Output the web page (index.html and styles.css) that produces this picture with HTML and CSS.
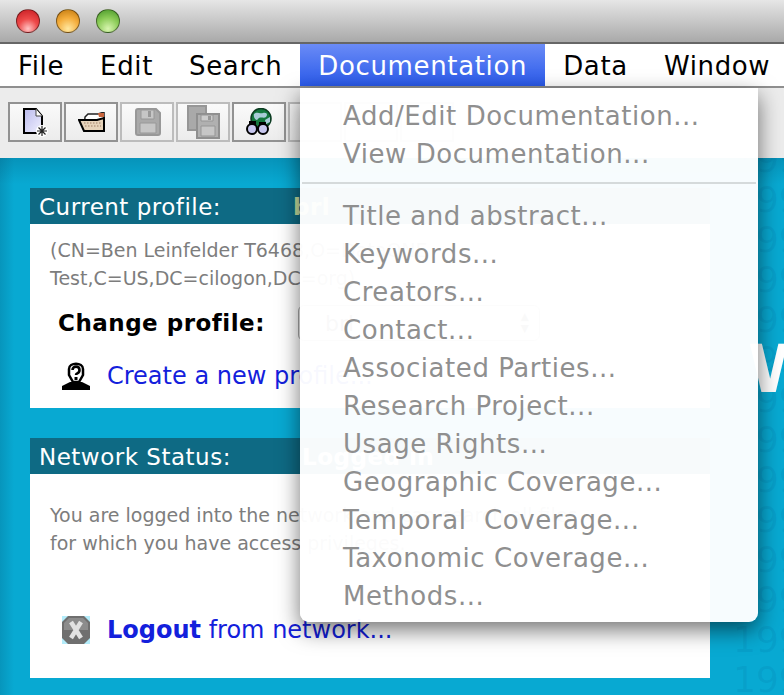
FILE: index.html
```html
<!DOCTYPE html>
<html lang="en">
<head>
  <meta charset="UTF-8">
  <title>Morpho</title>
  <link rel="stylesheet" href="styles.css">
</head>
<body>

  <div class="titlebar">
    <span class="light light-red"></span>
    <span class="light light-yellow"></span>
    <span class="light light-green"></span>
  </div>

  <nav class="menubar">
    <span class="menu-title">File</span>
    <span class="menu-title">Edit</span>
    <span class="menu-title">Search</span>
    <span class="menu-title menu-open">Documentation</span>
    <span class="menu-title">Data</span>
    <span class="menu-title">Window</span>
  </nav>

  <div class="toolbar">
    <button class="tool" type="button">
      <svg width="30" height="32" viewBox="0 0 30 32">
        <defs>
          <linearGradient id="sheet" x1="0" y1="0" x2="1" y2="1">
            <stop offset="0" stop-color="#b9b9ec"/>
            <stop offset="1" stop-color="#f2f2ff"/>
          </linearGradient>
        </defs>
        <path d="M4 3H16L22 10V27H4Z" fill="url(#sheet)" stroke="#000" stroke-width="2"/>
        <path d="M16 3V10H22" fill="#fff" stroke="#444" stroke-width="1"/>
        <circle cx="22" cy="25" r="6" fill="#fff"/>
        <path d="M22 20V30M17 25H27M18.500 21.500L25.500 28.500M25.500 21.500L18.500 28.500" stroke="#222" stroke-width="1.2"/>
      </svg>
    </button>
    <button class="tool" type="button">
      <svg width="27" height="20" viewBox="0 0 27 20">
        <path d="M7 5L10 2H20L26 0V17H6Z" fill="#fff" stroke="#222" stroke-width="1.5"/>
        <path d="M20 1H26V5H21Z" fill="#c8643c"/>
        <path d="M1 8H19L26 6V19H6Z" fill="#e6d3ba" stroke="#000" stroke-width="2"/>
        <path d="M6 11H23M7 14H23" stroke="#b89c84" stroke-width="1.5" stroke-dasharray="1.5 1.5"/>
      </svg>
    </button>
    <button class="tool tool-off" type="button">
      <svg width="28" height="28" viewBox="0 0 28 28">
        <path d="M3 3Q3 1 5 1H23L27 5V25Q27 27 25 27H5Q3 27 3 25Z" fill="#a9a9a9" stroke="#989898" stroke-width="2"/>
        <path d="M8 2H21V11H8Z" fill="#c6c6c6" stroke="#989898"/>
        <path d="M15 3H18V9H15Z" fill="#989898"/>
        <path d="M7 15H23V25H7Z" fill="#c6c6c6" stroke="#989898"/>
      </svg>
    </button>
    <button class="tool tool-off" type="button">
      <svg width="34" height="34" viewBox="0 0 34 34">
        <path d="M2 1H20V25H2Z" fill="#a9a9a9" stroke="#969696" stroke-width="2"/>
        <path d="M11 9H33V33H11Z" fill="#b0b0b0" stroke="#8f8f8f" stroke-width="2"/>
        <path d="M15 10H27V16H15Z" fill="#cccccc" stroke="#969696"/>
        <path d="M22 11H25V15H22Z" fill="#969696"/>
        <path d="M15 21H29V31H15Z" fill="#c6c6c6" stroke="#969696"/>
      </svg>
    </button>
    <button class="tool" type="button">
      <svg width="30" height="28" viewBox="0 0 30 28">
        <circle cx="17" cy="10.500" r="10" fill="#14783e" stroke="#0c3c22" stroke-width="1.500"/>
        <path d="M10 6C13 3 15 6 19 5S24 7 22 9 16 8 14 11 9 9 10 6Z" fill="#a8ccd8"/>
        <path d="M21 12L26 9V14L22 16Z" fill="#a8ccd8"/>
        <path d="M5 13H12V19H5ZM15 14H22V20H15Z" fill="#000"/>
        <circle cx="8" cy="21" r="5" fill="#c7c7ee" stroke="#000" stroke-width="2"/>
        <circle cx="19" cy="21" r="5" fill="#c7c7ee" stroke="#000" stroke-width="2"/>
      </svg>
    </button>
    <button class="tool tool-off" type="button"></button>
    <button class="tool tool-off" type="button"></button>
    <button class="tool tool-off" type="button"></button>
  </div>

  <main class="content">
    <div class="watermark">1999 1999 1999 1999 1999 1999 1999 1999 1999 1999 1999 1999 1999 1999</div>
    <div class="welcome">W</div>

    <section class="panel">
      <h2 class="panel-head">
        <span class="head-label">Current profile:</span>
        <span class="head-value head-value-green">brl</span>
      </h2>
      <div class="panel-body">
        <p class="note">(CN=Ben Leinfelder T6468,O=DataONE<br>Test,C=US,DC=cilogon,DC=org)</p>
        <div class="change-row">
          <strong class="change-label">Change profile:</strong>
          <div class="select">
            <span>brl</span>
            <span class="select-arrows">&#9650;<br>&#9660;</span>
          </div>
        </div>
        <div class="action">
          <svg class="action-icon" width="28" height="28" viewBox="0 0 28 28">
            <path d="M0 28V24L8 20H20L28 24V28Z" fill="#000"/>
            <path d="M7 7C7 0 21 0 21 7V13L17 20H11L7 13Z" fill="#fff" stroke="#000" stroke-width="2.500"/>
            <path d="M10.500 8C10.500 3.500 17.500 3.500 17.500 8S14 10 14 13" fill="none" stroke="#000" stroke-width="2.600"/>
            <path d="M12.500 15H15.500V18H12.500Z" fill="#000"/>
          </svg>
          <a class="action-link" href="#">Create a new profile...</a>
        </div>
      </div>
    </section>

    <section class="panel">
      <h2 class="panel-head">
        <span class="head-label">Network Status:</span>
        <span class="head-value head-value-login">Logged in</span>
      </h2>
      <div class="panel-body panel-body-tall">
        <p class="note">You are logged into the network and can search all files<br>for which you have access privileges.</p>
        <div class="action action-logout">
          <svg class="action-icon" width="28" height="28" viewBox="0 0 28 28">
            <rect width="28" height="28" fill="#b4ecfa"/>
            <path d="M6 0H22L28 6V22L22 28H6L0 22V6Z" fill="#6f6f6f"/>
            <path d="M7 2H21L26 7V14H2V7Z" fill="#8c8c8c"/>
            <path d="M9 6L19 22M19 6L9 22" stroke="#e2e2e2" stroke-width="4.500"/>
          </svg>
          <a class="action-link" href="#"><b>Logout</b> from network...</a>
        </div>
      </div>
    </section>
  </main>

  <div class="menu">
    <div class="menu-item">Add/Edit Documentation...</div>
    <div class="menu-item">View Documentation...</div>
    <hr class="menu-sep">
    <div class="menu-item">Title and abstract...</div>
    <div class="menu-item">Keywords...</div>
    <div class="menu-item">Creators...</div>
    <div class="menu-item">Contact...</div>
    <div class="menu-item">Associated Parties...</div>
    <div class="menu-item">Research Project...</div>
    <div class="menu-item">Usage Rights...</div>
    <div class="menu-item">Geographic Coverage...</div>
    <div class="menu-item">Temporal &nbsp;Coverage...</div>
    <div class="menu-item">Taxonomic Coverage...</div>
    <div class="menu-item">Methods...</div>
  </div>

</body>
</html>
```

FILE: styles.css
```css
html, body {
  margin: 0;
  height: 695px;
  overflow: hidden;
}

body {
  position: relative;
  font-family: "DejaVu Sans", Verdana, sans-serif;
  background-color: #08a9d2;
}

/* window chrome */
.titlebar {
  height: 42px;
  display: flex;
  align-items: center;
  gap: 16px;
  padding-left: 16px;
  background: linear-gradient(#e6e6e6, #a9a9a9);
  border-bottom: 2px solid #666;
}

.light {
  width: 24px;
  height: 24px;
  border-radius: 50%;
  box-sizing: border-box;
  border: 1px solid rgba(0, 0, 0, 0.45);
}

.light-red {
  background: radial-gradient(circle at 50% 85%, #ffc4c4, #ee4a4a 45%, #c81e24 95%);
}

.light-yellow {
  background: radial-gradient(circle at 50% 85%, #ffe8a0, #f4ad3c 50%, #c47c12 95%);
}

.light-green {
  background: radial-gradient(circle at 50% 85%, #d8f5b0, #8ccc58 50%, #4c9a2c 95%);
}

.menubar {
  height: 42px;
  display: flex;
  background-color: #fff;
  border-bottom: 2px solid #8f8f8f;
}

.menu-title {
  padding: 0 18px;
  font-size: 26px;
  letter-spacing: 0.65px;
  line-height: 44px;
  color: #000;
}

.menu-open {
  color: #fff;
  background: linear-gradient(#6a8bf6, #2a5aea);
}

.toolbar {
  height: 70px;
  box-sizing: border-box;
  padding: 14px 0 0 8px;
  display: flex;
  gap: 2px;
  background-color: #ececec;
}

.tool {
  width: 54px;
  height: 40px;
  padding: 0;
  display: flex;
  align-items: center;
  justify-content: center;
  box-sizing: border-box;
  border: 2px solid #929292;
  background: linear-gradient(#fafafa, #ececec);
}

.tool-off {
  border-color: #bcbcbc;
}

/* main page */
.content {
  position: relative;
  height: 537px;
  box-sizing: border-box;
  padding: 30px 74px 0 30px;
  overflow: hidden;
  background:
    linear-gradient(rgba(0, 70, 100, 0.22), rgba(0, 70, 100, 0) 26px),
    linear-gradient(90deg, rgba(0, 70, 100, 0.2), rgba(0, 70, 100, 0) 14px),
    #08a9d2;
}

.watermark {
  position: absolute;
  top: -18px;
  left: 733px;
  width: 90px;
  font-size: 36px;
  line-height: 40px;
  color: rgba(0, 80, 130, 0.1);
}

.welcome {
  position: absolute;
  top: 172px;
  left: 748px;
  font-size: 66px;
  font-weight: bold;
  line-height: 80px;
  color: #fff;
}

.panel {
  position: relative;
  margin-bottom: 30px;
  background-color: #fff;
}

.panel-head {
  height: 36px;
  margin: 0;
  display: flex;
  align-items: center;
  padding: 2px 0 0 9px;
  box-sizing: border-box;
  font-weight: normal;
  font-size: 23px;
  letter-spacing: 0.5px;
  color: #fff;
  background-color: #0e6a84;
}

.head-label {
  width: 254px;
}

.head-value {
  font-weight: bold;
}

.head-value-green {
  color: #c5dea0;
}

.head-value-login {
  margin-left: 9px;
}

.panel-body {
  height: 184px;
  box-sizing: border-box;
  padding: 12px 20px 0;
}

.panel-body-tall {
  height: 204px;
  padding-top: 27px;
}

.note {
  margin: 0;
  font-size: 19px;
  line-height: 28px;
  color: #7d7d7d;
}

.change-row {
  display: flex;
  align-items: center;
  margin: 13px 0 0 8px;
}

.change-label {
  width: 240px;
  font-size: 23px;
  letter-spacing: 0.5px;
  color: #000;
}

.select {
  width: 242px;
  height: 36px;
  box-sizing: border-box;
  padding: 0 10px 0 26px;
  display: flex;
  align-items: center;
  justify-content: space-between;
  border: 1px solid #aaa;
  border-radius: 6px;
  font-size: 22px;
  color: #444;
  background-color: #f2f2f2;
}

.select-arrows {
  font-size: 11px;
  line-height: 12px;
  color: #555;
}

.action {
  display: flex;
  align-items: center;
  gap: 17px;
  margin: 21px 0 0 12px;
}

.action-logout {
  margin-top: 59px;
}

.action-link {
  font-size: 24px;
  color: #1320dc;
  text-decoration: none;
}

/* open menu, over the page */
.menu {
  position: absolute;
  top: 88px;
  left: 300px;
  width: 458px;
  height: 534px;
  box-sizing: border-box;
  padding-top: 9px;
  background-color: rgba(255, 255, 255, 0.97);
  border-radius: 0 0 9px 9px;
  box-shadow: 0 8px 22px rgba(0, 0, 0, 0.55);
}

.menu-item {
  height: 38px;
  padding-left: 43px;
  font-size: 26px;
  letter-spacing: 0.55px;
  line-height: 38px;
  color: #8f8f8f;
  white-space: nowrap;
}

.menu-sep {
  height: 2px;
  margin: 9px 2px 13px;
  border: 0;
  background-color: #d5dadb;
}
```
